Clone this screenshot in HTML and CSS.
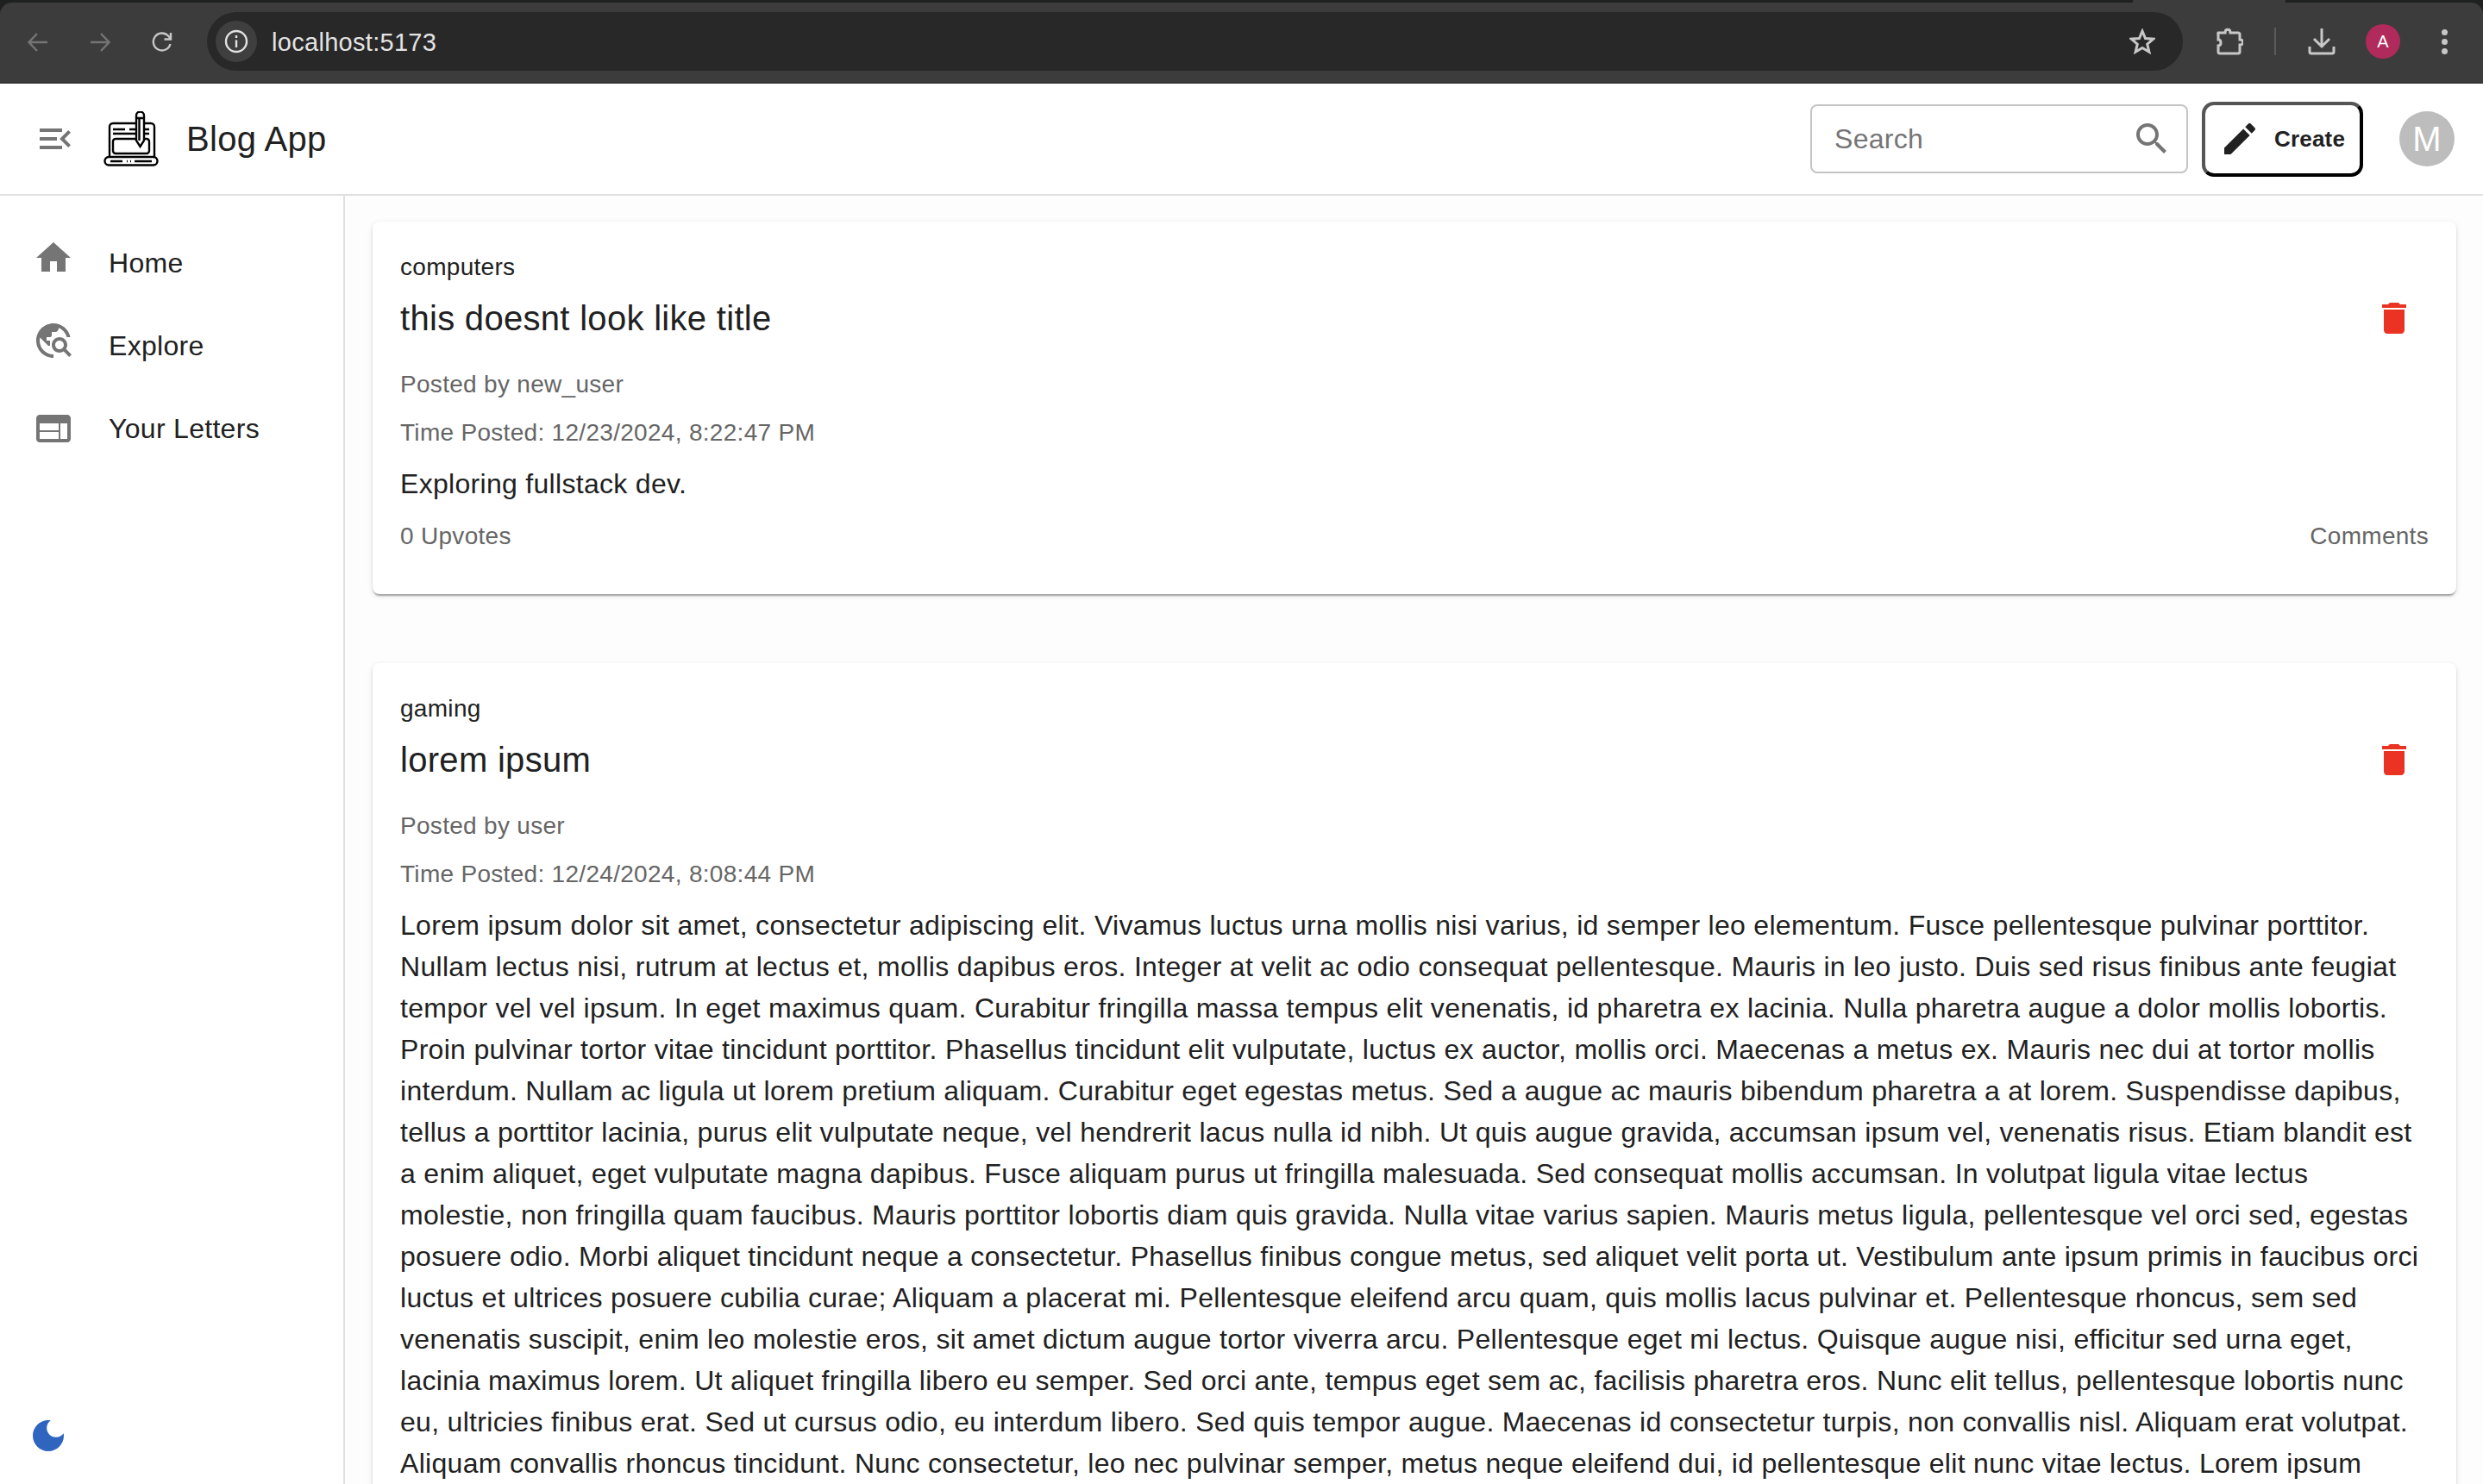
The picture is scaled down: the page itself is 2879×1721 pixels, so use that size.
FILE: index.html
```html
<!DOCTYPE html>
<html>
<head>
	<meta charset="utf-8">
	<meta name="viewport" content="width=device-width, initial-scale=1">
	<title>Blog App</title>
	<link rel="stylesheet" href="styles.css">
</head>
<body>
	<div class="browser">
		<div class="tab"></div>
		<div class="toolbar">
			<svg class="tb-icon" viewBox="0 0 24 24"><path d="M23 12H2M11 2 1.5 12 11 22" stroke="#757575"/></svg>
			<svg class="tb-icon" viewBox="0 0 24 24"><path d="M1 12h21M13 2l9.500 10L13 22" stroke="#757575"/></svg>
			<svg class="tb-icon" viewBox="0 0 24 24"><path d="M21.500 14a10 10 0 1 1-2.500-9.500L22 8M22 1v7.500h-7.500" stroke="#c7c7c7"/></svg>
			<div class="omnibox">
				<div class="site-info">
					<svg viewBox="0 0 28 28"><circle cx="14" cy="14" r="12" stroke="#e3e3e3"/><path d="M14 12.500V21M14 7v3" stroke="#e3e3e3"/></svg>
				</div>
				<span class="url">localhost:5173</span>
				<svg class="star" viewBox="0 0 30 30"><path d="m15 3 3.500 8.500 9.200.7-7 6 2.200 9L15 22.400 7.100 27.200l2.200-9-7-6 9.200-.7z" stroke="#c7c7c7"/></svg>
			</div>
			<svg class="ext" viewBox="0 0 32 32"><path d="M3 6h8c0-5 6-5 6 0h9a2 2 0 0 1 2 2v6c5 0 5 6 0 6v8a2 2 0 0 1-2 2H5a2 2 0 0 1-2-2v-7c4 0 4-7 0-7V8a2 2 0 0 1 0-2z" stroke="#c7c7c7"/></svg>
			<div class="tb-sep"></div>
			<svg class="dl" viewBox="0 0 32 32"><path d="M16 1v20M7 13l9 9 9-9M2 22v6a2 2 0 0 0 2 2h24a2 2 0 0 0 2-2v-6" stroke="#c7c7c7"/></svg>
			<div class="profile">A</div>
			<div class="dots"><i></i><i></i><i></i></div>
		</div>
	</div>

	<header class="appbar">
		<svg class="icon" viewBox="0 0 24 24"><path fill="#757575" d="M3 18h13v-2H3v2zm0-5h10v-2H3v2zm0-7v2h13V6H3zm18 9.590L17.420 12 21 8.410 19.590 7l-5 5 5 5L21 15.590z"/></svg>
		<svg class="logo" viewBox="0 0 64 64">
			<path d="M7 53V18a4 4 0 0 1 4-4h27M47 14h8a4 4 0 0 1 4 4v35"/>
			<rect x="1.500" y="53" width="61" height="9.500" rx="4.700"/>
			<path d="M38 32H14a3 3 0 0 0-3 3v11a3 3 0 0 0 3 3h36a3 3 0 0 0 3-3V35a3 3 0 0 0-3-3h-3"/>
			<path d="M11 21h14M30 21h8M47 21h6M11 26h26M47 26h6M8 58h14M27 58h1M31 58h1M36 58h20"/>
			<path class="pencil" d="M38 5a4.500 4.500 0 0 1 9 0v29l-4.500 7-4.500-7zM38 8h9M41.500 8v26"/>
		</svg>
		<h1 class="brand">Blog App</h1>
		<div class="appbar-right">
			<div class="search">
				<span>Search</span>
				<svg class="icon" viewBox="0 0 24 24"><path fill="#757575" d="M15.500 14h-.79l-.28-.27C15.410 12.590 16 11.110 16 9.500 16 5.910 13.090 3 9.500 3S3 5.910 3 9.500 5.910 16 9.500 16c1.610 0 3.090-.59 4.230-1.570l.27.28v.79l5 4.990L20.490 19l-4.990-5zm-6 0C7.010 14 5 11.990 5 9.500S7.010 5 9.500 5 14 7.010 14 9.500 11.990 14 9.500 14z"/></svg>
			</div>
			<button class="create">
				<svg class="icon" viewBox="0 0 24 24"><path fill="#212121" d="M3 17.250V21h3.750L17.810 9.940l-3.750-3.750L3 17.250zM20.710 7.040c.39-.39.39-1.020 0-1.410l-2.340-2.340a.9959.9959 0 0 0-1.410 0l-1.830 1.830 3.750 3.750 1.830-1.830z"/></svg>
				Create
			</button>
			<div class="avatar">M</div>
		</div>
	</header>

	<div class="page">
		<nav class="sidebar">
			<a class="nav-item">
				<svg class="icon" viewBox="0 0 24 24"><path fill="#757575" d="M10 20v-6h4v6h5v-8h3L12 3 2 12h3v8z"/></svg>
				<span>Home</span>
			</a>
			<a class="nav-item">
				<svg class="icon" viewBox="0 0 24 24"><path fill="#757575" d="M19.300 16.900c.4-.7.7-1.500.7-2.400 0-2.500-2-4.500-4.500-4.500S11 12 11 14.500s2 4.500 4.500 4.500c.9 0 1.700-.3 2.400-.7l3.200 3.200 1.400-1.400-3.200-3.200zm-3.800.1c-1.400 0-2.500-1.100-2.500-2.500s1.100-2.500 2.500-2.500 2.500 1.100 2.500 2.500-1.100 2.500-2.500 2.500zM12 20v2C6.480 22 2 17.520 2 12S6.480 2 12 2c4.840 0 8.870 3.440 9.800 8h-2.070c-.64-2.460-2.400-4.470-4.730-5.410V5c0 1.100-.9 2-2 2h-2v2c0 .55-.45 1-1 1H8v2h2v3H9l-4.790-4.790C4.080 10.790 4 11.380 4 12c0 4.410 3.590 8 8 8z"/></svg>
				<span>Explore</span>
			</a>
			<a class="nav-item nav-letters">
				<svg class="icon" viewBox="0 0 24 24"><path fill="#757575" d="M20 4H4c-1.100 0-1.990.9-1.990 2L2 18c0 1.100.9 2 2 2h16c1.100 0 2-.9 2-2V6c0-1.100-.9-2-2-2zm-5 14H4v-4h11v4zm0-5H4V9h11v4zm5 5h-4V9h4v9z"/></svg>
				<span>Your Letters</span>
			</a>
			<svg class="icon moon" viewBox="0 0 24 24"><path fill="#3065bf" d="M12 3c-4.970 0-9 4.030-9 9s4.030 9 9 9 9-4.030 9-9c0-.46-.04-.92-.1-1.360-.98 1.370-2.580 2.260-4.400 2.260-2.980 0-5.400-2.420-5.400-5.400 0-1.810.89-3.420 2.260-4.400-.44-.06-.9-.1-1.360-.1z"/></svg>
		</nav>

		<main class="feed">
			<article class="card">
				<div class="category">computers</div>
				<div class="title-row">
					<h2 class="title">this doesnt look like title</h2>
					<svg class="icon trash" viewBox="0 0 24 24"><path fill="#ea3323" d="M6 19c0 1.100.9 2 2 2h8c1.100 0 2-.9 2-2V7H6v12zM19 4h-3.500l-1-1h-5l-1 1H5v2h14V4z"/></svg>
				</div>
				<div class="meta">Posted by new_user</div>
				<div class="meta">Time Posted: 12/23/2024, 8:22:47 PM</div>
				<p class="body-text">Exploring fullstack dev.</p>
				<div class="meta foot">
					<span>0 Upvotes</span>
					<span>Comments</span>
				</div>
			</article>

			<article class="card">
				<div class="category">gaming</div>
				<div class="title-row">
					<h2 class="title">lorem ipsum</h2>
					<svg class="icon trash" viewBox="0 0 24 24"><path fill="#ea3323" d="M6 19c0 1.100.9 2 2 2h8c1.100 0 2-.9 2-2V7H6v12zM19 4h-3.500l-1-1h-5l-1 1H5v2h14V4z"/></svg>
				</div>
				<div class="meta">Posted by user</div>
				<div class="meta">Time Posted: 12/24/2024, 8:08:44 PM</div>
				<p class="body-text">Lorem ipsum dolor sit amet, consectetur adipiscing elit. Vivamus luctus urna mollis nisi varius, id semper leo elementum. Fusce pellentesque pulvinar porttitor. Nullam lectus nisi, rutrum at lectus et, mollis dapibus eros. Integer at velit ac odio consequat pellentesque. Mauris in leo justo. Duis sed risus finibus ante feugiat tempor vel vel ipsum. In eget maximus quam. Curabitur fringilla massa tempus elit venenatis, id pharetra ex lacinia. Nulla pharetra augue a dolor mollis lobortis. Proin pulvinar tortor vitae tincidunt porttitor. Phasellus tincidunt elit vulputate, luctus ex auctor, mollis orci. Maecenas a metus ex. Mauris nec dui at tortor mollis interdum. Nullam ac ligula ut lorem pretium aliquam. Curabitur eget egestas metus. Sed a augue ac mauris bibendum pharetra a at lorem. Suspendisse dapibus, tellus a porttitor lacinia, purus elit vulputate neque, vel hendrerit lacus nulla id nibh. Ut quis augue gravida, accumsan ipsum vel, venenatis risus. Etiam blandit est a enim aliquet, eget vulputate magna dapibus. Fusce aliquam purus ut fringilla malesuada. Sed consequat mollis accumsan. In volutpat ligula vitae lectus molestie, non fringilla quam faucibus. Mauris porttitor lobortis diam quis gravida. Nulla vitae varius sapien. Mauris metus ligula, pellentesque vel orci sed, egestas posuere odio. Morbi aliquet tincidunt neque a consectetur. Phasellus finibus congue metus, sed aliquet velit porta ut. Vestibulum ante ipsum primis in faucibus orci luctus et ultrices posuere cubilia curae; Aliquam a placerat mi. Pellentesque eleifend arcu quam, quis mollis lacus pulvinar et. Pellentesque rhoncus, sem sed venenatis suscipit, enim leo molestie eros, sit amet dictum augue tortor viverra arcu. Pellentesque eget mi lectus. Quisque augue nisi, efficitur sed urna eget, lacinia maximus lorem. Ut aliquet fringilla libero eu semper. Sed orci ante, tempus eget sem ac, facilisis pharetra eros. Nunc elit tellus, pellentesque lobortis nunc eu, ultricies finibus erat. Sed ut cursus odio, eu interdum libero. Sed quis tempor augue. Maecenas id consectetur turpis, non convallis nisl. Aliquam erat volutpat. Aliquam convallis rhoncus tincidunt. Nunc consectetur, leo nec pulvinar semper, metus neque eleifend dui, id pellentesque elit nunc vitae lectus. Lorem ipsum</p>
			</article>
		</main>
	</div>
</body>
</html>
```

FILE: styles.css
```css
html,body{height: 100%;}
body{margin: 0;display: flex;flex-direction: column;overflow: hidden;background: #fff;color: #212121;font-family: "Liberation Sans", Arial, sans-serif;}
svg{display: block;flex: none;}
.icon{width: 48px;height: 48px;}

/* browser frame */
.browser{position: relative;height: 97px;flex: none;background: #1f2020;padding-top: 3px;box-sizing: border-box;}
.tab{position: absolute;top: 0;right: 229px;width: 177px;height: 4px;background: #3c3c3c;}
.toolbar{height: 94px;background: #3c3c3c;border-radius: 14px 14px 0 0;border-bottom: 2px solid #353535;box-sizing: border-box;display: flex;align-items: center;padding-left: 32px;}
.toolbar svg{fill: none;stroke-width: 2.4;}
.tb-icon{width: 24px;height: 24px;margin-right: 48px;}
.omnibox{height: 68px;width: 2291px;margin-left: -8px;margin-top: -2px;background: #282828;border-radius: 34px;display: flex;align-items: center;padding: 0 32px 0 10px;box-sizing: border-box;}
.site-info{width: 48px;height: 48px;border-radius: 24px;background: #3f3f3f;display: flex;align-items: center;justify-content: center;}
.site-info svg{width: 28px;height: 28px;}
.url{margin: 2px 0 0 17px;font-size: 29px;letter-spacing: .3px;color: #e3e3e3;}
.toolbar .star{width: 30px;height: 30px;margin-left: auto;stroke-width: 3;}
.toolbar .ext{width: 32px;height: 32px;margin-left: 38px;margin-top: -2px;stroke-width: 3;}
.tb-sep{width: 2px;height: 32px;background: #5a5a5a;margin-left: 36px;margin-top: -2px;}
.toolbar .dl{width: 32px;height: 32px;margin-left: 37px;margin-top: -2px;stroke-width: 3;}
.profile{width: 40px;height: 40px;border-radius: 50%;background: #b02a5b;color: #fff;font-size: 20px;line-height: 40px;text-align: center;margin-left: 35px;margin-top: -2px;}
.dots{display: flex;flex-direction: column;gap: 4px;margin-left: 48px;margin-top: -2px;}
.dots i{display: block;width: 7px;height: 7px;border-radius: 50%;background: #c7c7c7;}

/* app bar */
.appbar{height: 130px;flex: none;box-sizing: border-box;border-bottom: 2px solid #e0e0e0;display: flex;align-items: center;padding: 0 33px 0 40px;}
.logo{width: 64px;height: 64px;margin-left: 32px;fill: none;stroke: #000;stroke-width: 2.400;}
.pencil{fill: #fff;}
.brand{margin: 0 0 0 32px;font-size: 40px;font-weight: 400;letter-spacing: .3px;line-height: 64px;}
.appbar-right{margin-left: auto;display: flex;align-items: center;}
.search{width: 438px;height: 80px;box-sizing: border-box;border: 2px solid #c4c4c4;border-radius: 8px;display: flex;align-items: center;justify-content: space-between;padding: 0 16px 0 26px;font-size: 32px;letter-spacing: .3px;color: #757575;}
.create{width: 187px;height: 87px;margin-left: 16px;box-sizing: border-box;background: #fff;border: 4px solid;border-color: #555 #000 #000 #555;border-radius: 14px;display: flex;align-items: center;gap: 16px;padding: 0 0 0 16px;font: 700 26px "Liberation Sans", Arial, sans-serif;letter-spacing: .2px;color: #212121;}
.avatar{width: 64px;height: 64px;margin-left: 42px;border-radius: 50%;background: #bdbdbd;color: #fff;font-size: 40px;line-height: 64px;text-align: center;}

/* page */
.page{flex: 1;display: flex;min-height: 0;}
.sidebar{width: 400px;flex: none;box-sizing: border-box;border-right: 2px solid #e0e0e0;display: flex;flex-direction: column;padding: 48px 0 32px 38px;}
.nav-item{display: flex;gap: 40px;height: 96px;font-size: 32px;letter-spacing: .3px;line-height: 48px;}
.nav-item span{margin-top: 6px;}
.nav-letters .icon{margin-top: 6px;}
.moon{margin: auto 0 0 -6px;}

.feed{flex: 1;min-width: 0;padding: 30px 31px 0 32px;background: #fdfdfd;}
.card{background: #fff;border-radius: 8px;padding: 32px 32px 48px;margin-bottom: 80px;display: flex;flex-direction: column;gap: 16px;box-shadow: 0 4px 2px -2px rgba(0,0,0,.2), 0 2px 2px 0 rgba(0,0,0,.14), 0 2px 6px 0 rgba(0,0,0,.12);}
.category{font-size: 28px;line-height: 42px;letter-spacing: .3px;margin-bottom: -18px;}
.title-row{display: flex;align-items: center;justify-content: space-between;height: 80px;}
.title{margin: 0;font-size: 40px;font-weight: 400;line-height: 64px;letter-spacing: .3px;}
.trash{margin-right: 16px;}
.meta{font-size: 28px;line-height: 42px;margin-bottom: -2px;letter-spacing: .3px;color: #666;}
.foot{display: flex;justify-content: space-between;}
.body-text{margin: 0;font-size: 32px;line-height: 48px;letter-spacing: .3px;}
```
